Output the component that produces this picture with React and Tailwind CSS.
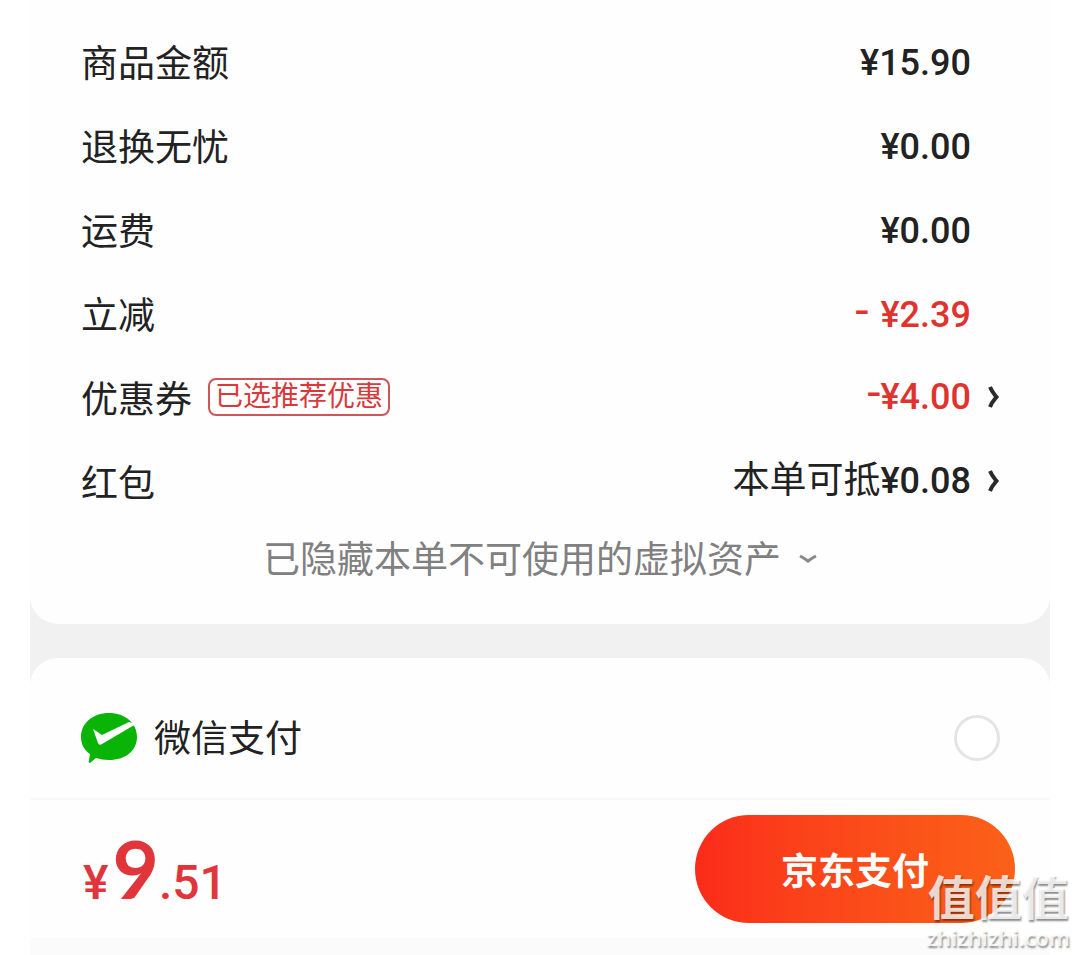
import React, { useState } from 'react';

const rows = [
  { label: '商品金额', value: '¥15.90' },
  { label: '退换无忧', value: '¥0.00' },
  { label: '运费', value: '¥0.00' },
  { label: '立减', sign: '- ', value: '¥2.39' },
  { label: '优惠券', tag: '已选推荐优惠', sign: '-', value: '¥4.00', link: true },
  { label: '红包', note: '本单可抵', value: '¥0.08', link: true },
];

const ArrowIcon = () => (
  <svg className="w-3 h-6" viewBox="0 0 12 24" fill="none" stroke="#2a2a2a" strokeWidth="4">
    <path d="M2 2 C4 7 6 9 8.5 12 C6 15 4 17 2 22" />
  </svg>
);

const WechatPayIcon = () => (
  <svg className="w-[58px] h-[52px] shrink-0" viewBox="0 0 58 52">
    <path
      d="M29 1 C45 1 57 11 57 25 C57 39 45 48 29 48 C24 48 20 47 16 46 L10 51 Q8 51 9 48 L10 42 C4 38 1 32 1 25 C1 11 13 1 29 1 Z"
      fill="#09b407"
    />
    <path d="M13 17 L22 23 L49 10 L56 12 L22 32 Q19 34 18 31 Z" fill="#fff" />
  </svg>
);

const PriceRow = ({ row }) => {
  const Row = row.link ? 'button' : 'div';
  return (
    <Row className="w-full h-[84px] flex items-center justify-between text-left">
      <span className="flex items-center gap-4 pt-1">
        {row.label}
        {row.tag && (
          <span className="h-[38px] px-[5px] mb-2 flex items-center border-2 border-[#d0555a] rounded-lg text-[28px] leading-none text-[#d9393b]">
            {row.tag}
          </span>
        )}
      </span>
      <span className={`flex items-center gap-[17px] ${row.link ? 'pb-1' : ''}`}>
        <span className={`flex items-baseline ${row.sign ? 'text-[#e0332f]' : ''}`}>
          {row.note}
          {row.sign && <span className="text-[48px] leading-[36px] whitespace-pre">{row.sign}</span>}
          <span className="text-[36px] font-medium">{row.value}</span>
        </span>
        <span className="w-3">{row.link && <ArrowIcon />}</span>
      </span>
    </Row>
  );
};

const App = () => {
  const [payMethod, setPayMethod] = useState('');

  return (
    <div className="relative min-h-screen bg-white pl-[30px] pr-7 font-['Roboto','Noto_Sans_CJK_SC',sans-serif] text-[37px] leading-[48px] text-[#222]">
      <main className="bg-[#f1f1f1]">
        <section className="bg-[#fefefe] rounded-b-[28px] pl-[51px] pr-[50px] pt-[21px] pb-[31px]">
          {rows.map((row) => (
            <PriceRow key={row.label} row={row} />
          ))}
          <button className="w-full h-[68px] pt-1 flex items-center justify-center gap-[17px] text-[#808080]">
            已隐藏本单不可使用的虚拟资产
            <svg className="w-5 h-3 mb-1" viewBox="0 0 20 12" fill="none" stroke="#888" strokeWidth="3">
              <path d="M2 3 Q6 5 10 8 Q14 5 18 3" />
            </svg>
          </button>
        </section>

        <section className="mt-[34px] bg-[#fefefe] rounded-t-[28px]">
          <label className="h-[140px] pl-[50px] pr-[50px] pt-5 flex items-center justify-between">
            <span className="flex items-center gap-4">
              <WechatPayIcon />
              <span className="pt-1">微信支付</span>
            </span>
            <input
              type="radio"
              name="pay"
              checked={payMethod === 'wechat'}
              onChange={() => setPayMethod('wechat')}
              className="appearance-none w-[46px] h-[46px] rounded-full border-[3px] border-[#e4e4e4] bg-white checked:border-[14px] checked:border-[#f92c1b]"
            />
          </label>
        </section>
      </main>

      <footer className="h-[140px] flex items-center justify-between pl-[53px] pr-[35px] border-t-2 border-[#f9f9f9] bg-[#fefefe]">
        <div className="flex items-baseline pt-3 text-[48px] leading-[100px] font-medium text-[#e0353a]">
          <span className="pr-1">¥</span>
          <span className="font-['Lato',sans-serif] text-[80px] font-bold">9</span>
          <span>.51</span>
        </div>
        <button className="w-80 h-[108px] pt-2 rounded-full bg-linear-to-r from-[#fb2b1a] to-[#fb6118] font-bold text-white">
          京东支付
        </button>
      </footer>
      <div className="h-[17px] bg-[#fbfbfb]" />

      {/* site watermark */}
      <div className="absolute right-2 bottom-1 flex flex-col items-center text-white/80 [text-shadow:1px_2px_2px_rgba(0,0,0,0.45)] pointer-events-none">
        <span className="text-[47px] leading-[48px] font-bold">值值值</span>
        <span className="font-['Open_Sans',sans-serif] text-[22px] leading-7 font-semibold">zhizhizhi.com</span>
      </div>
    </div>
  );
};

export default App;
